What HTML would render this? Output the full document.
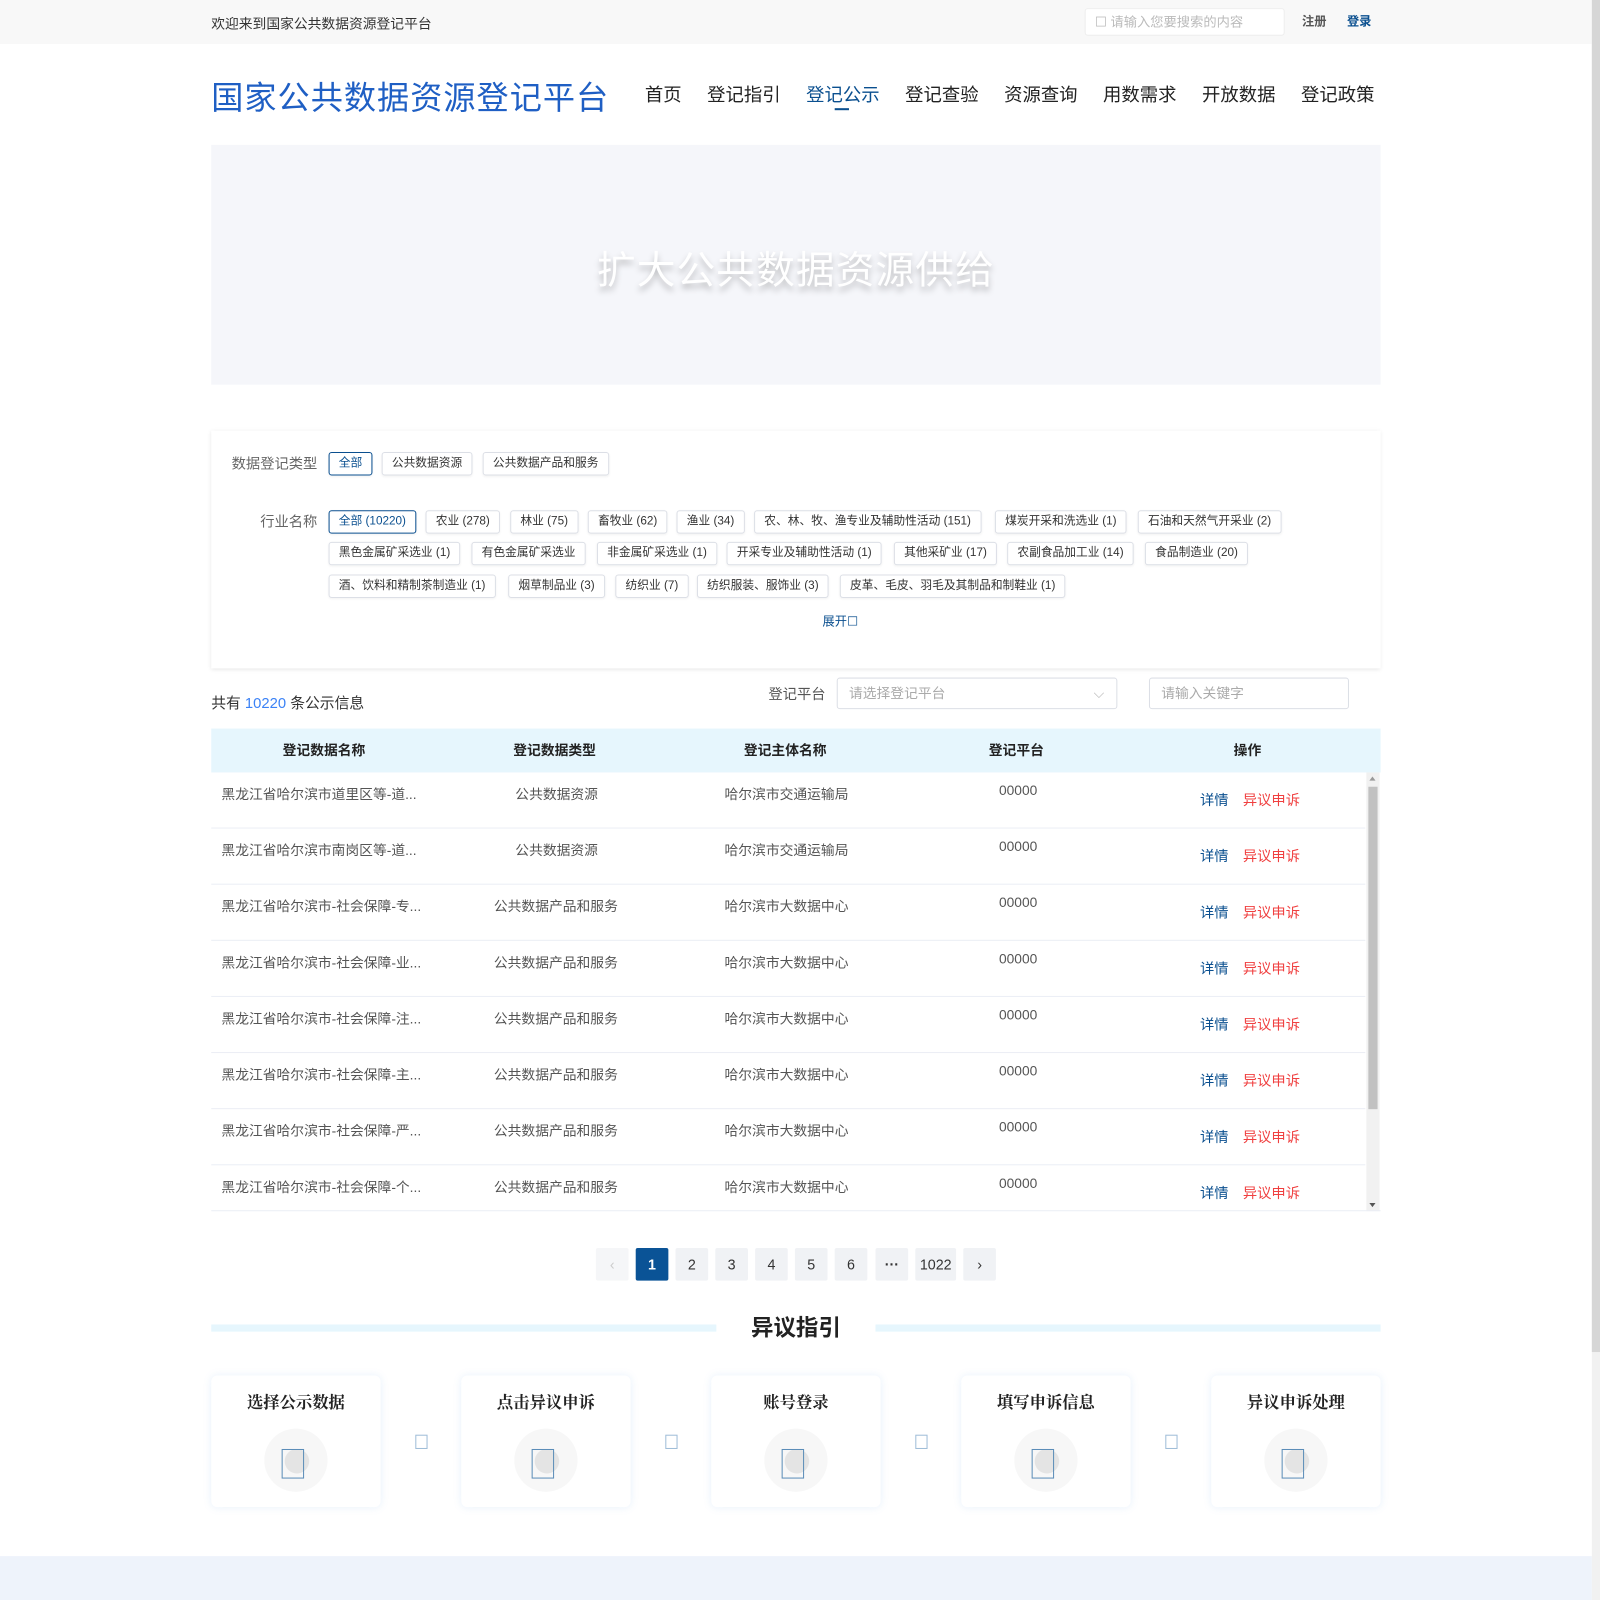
<!DOCTYPE html>
<html><head><meta charset="utf-8"><style>
*{margin:0;padding:0;box-sizing:border-box}
html,body{width:1600px;height:1600px;overflow:hidden;background:#fff}
body{font-family:"Liberation Sans","Noto Sans CJK SC",sans-serif;color:#333}
#w{position:absolute;left:0;top:0;width:1568px;height:1568px;transform:scale(1.020408);transform-origin:0 0}
.a{position:absolute}
.tag{position:absolute;height:23px;border:1px solid #dcdfe6;border-radius:3px;font-size:11.5px;line-height:21px;padding:0 9px;color:#333;white-space:nowrap;box-shadow:0 1px 2px rgba(0,0,0,.05)}
.tag.on{border-color:#0a4f8f;color:#0a4f8f}
.nav{position:absolute;top:79px;font-size:18px;color:#222}
.row{position:absolute;left:207px;width:1131px;height:55px;border-bottom:1px solid #ebeef5;font-size:13.5px;color:#555}
.row span{position:absolute;top:10px;white-space:nowrap}
.pg{position:absolute;top:1223px;width:32px;height:32px;background:#f0f2f5;border-radius:2px;text-align:center;line-height:32px;font-size:14px;color:#333}
.card{position:absolute;top:1348px;width:166px;height:129px;background:#fff;border-radius:6px;box-shadow:0 0 8px rgba(100,160,230,.15);text-align:center}
.card b{display:block;margin-top:14px;font-size:16px;color:#222;font-family:"Liberation Serif","Noto Serif CJK SC",serif}
.card i{position:absolute;left:52px;top:52px;width:62px;height:62px;border-radius:50%;background:#f7f7f7}
.card i:before{content:"";position:absolute;left:20px;top:20px;width:24px;height:24px;border-radius:50%;background:#e4e4e4}
.card i:after{content:"";position:absolute;left:17px;top:20px;width:20px;height:27px;border:1px solid #5b8db8}
.arr{position:absolute;top:1406px;width:12px;height:14px;border:1px solid #9fbdd8}
</style></head><body><div id="w">
<div class="a" style="left:0;top:0;width:1560px;height:43px;background:#f8f8f8"></div>
<div class="a" style="left:207px;top:12px;font-size:13.5px;color:#333">欢迎来到国家公共数据资源登记平台</div>
<div class="a" style="left:1063px;top:8px;width:196px;height:27px;background:#fff;border:1px solid #eee;border-radius:3px;font-size:13px;color:#bbb;line-height:25px;padding-left:9px">☐ 请输入您要搜索的内容</div>
<div class="a" style="left:1276px;top:12px;font-size:12px;font-weight:bold;color:#555">注册</div>
<div class="a" style="left:1320px;top:12px;font-size:12px;font-weight:bold;color:#0a4f8f">登录</div>
<div class="a" style="left:207px;top:71px;font-size:31.5px;color:#1f5fc4;letter-spacing:1px">国家公共数据资源登记平台</div>
<div class="nav" style="left:632px">首页</div>
<div class="nav" style="left:693px">登记指引</div>
<div class="nav" style="left:790px;color:#0a4f8f">登记公示</div>
<div class="a" style="left:818px;top:106px;width:14px;height:2px;background:#0a4f8f"></div>
<div class="nav" style="left:887px">登记查验</div>
<div class="nav" style="left:984px">资源查询</div>
<div class="nav" style="left:1081px">用数需求</div>
<div class="nav" style="left:1178px">开放数据</div>
<div class="nav" style="left:1275px">登记政策</div>
<div class="a" style="left:207px;top:142px;width:1146px;height:235px;background:#f5f6fa"></div>
<div class="a" style="left:207px;top:234px;width:1146px;text-align:center;font-size:38px;color:#fff;text-shadow:0 4px 6px rgba(0,0,0,.25);letter-spacing:1px">扩大公共数据资源供给</div>
<div class="a" style="left:207px;top:422px;width:1146px;height:233px;background:#fff;box-shadow:0 1px 4px rgba(0,0,0,.1)"></div>
<div class="a" style="left:227px;top:444px;font-size:14px;color:#666">数据登记类型</div>
<div class="tag on" style="left:322px;top:443px">全部</div>
<div class="tag" style="left:374px;top:443px">公共数据资源</div>
<div class="tag" style="left:473px;top:443px">公共数据产品和服务</div>
<div class="a" style="left:255px;top:501px;font-size:14px;color:#666">行业名称</div>
<div class="tag on" style="left:322px;top:500px">全部 (10220)</div>
<div class="tag" style="left:417px;top:500px">农业 (278)</div>
<div class="tag" style="left:500px;top:500px">林业 (75)</div>
<div class="tag" style="left:576px;top:500px">畜牧业 (62)</div>
<div class="tag" style="left:663px;top:500px">渔业 (34)</div>
<div class="tag" style="left:739px;top:500px">农、林、牧、渔专业及辅助性活动 (151)</div>
<div class="tag" style="left:975px;top:500px">煤炭开采和洗选业 (1)</div>
<div class="tag" style="left:1115px;top:500px">石油和天然气开采业 (2)</div>
<div class="tag" style="left:322px;top:531px">黑色金属矿采选业 (1)</div>
<div class="tag" style="left:462px;top:531px">有色金属矿采选业</div>
<div class="tag" style="left:585px;top:531px">非金属矿采选业 (1)</div>
<div class="tag" style="left:712px;top:531px">开采专业及辅助性活动 (1)</div>
<div class="tag" style="left:876px;top:531px">其他采矿业 (17)</div>
<div class="tag" style="left:987px;top:531px">农副食品加工业 (14)</div>
<div class="tag" style="left:1122px;top:531px">食品制造业 (20)</div>
<div class="tag" style="left:322px;top:563px">酒、饮料和精制茶制造业 (1)</div>
<div class="tag" style="left:498px;top:563px">烟草制品业 (3)</div>
<div class="tag" style="left:603px;top:563px">纺织业 (7)</div>
<div class="tag" style="left:683px;top:563px">纺织服装、服饰业 (3)</div>
<div class="tag" style="left:823px;top:563px">皮革、毛皮、羽毛及其制品和制鞋业 (1)</div>
<div class="a" style="left:806px;top:600px;font-size:12px;color:#0a4f8f">展开☐</div>
<div class="a" style="left:207px;top:678px;font-size:14.5px;color:#333">共有 <span style="color:#3b82f6">10220</span> 条公示信息</div>
<div class="a" style="left:753px;top:670px;font-size:14px;color:#555">登记平台</div>
<div class="a" style="left:820px;top:664px;width:275px;height:31px;border:1px solid #dcdfe6;border-radius:3px;font-size:13.5px;color:#aaa;line-height:29px;padding-left:11px">请选择登记平台<span style="position:absolute;right:12px;top:0;color:#bbb">⌵</span></div>
<div class="a" style="left:1126px;top:664px;width:196px;height:31px;border:1px solid #dcdfe6;border-radius:3px;font-size:13.5px;color:#aaa;line-height:29px;padding-left:11px">请输入关键字</div>
<div class="a" style="left:207px;top:714px;width:1146px;height:43px;background:#e6f6fd;font-size:13.5px;font-weight:bold;color:#222;line-height:43px">
<span class="a" style="left:70px">登记数据名称</span><span class="a" style="left:296px">登记数据类型</span><span class="a" style="left:522px">登记主体名称</span><span class="a" style="left:762px">登记平台</span><span class="a" style="left:1002px">操作</span></div>
<div class="a" style="left:1339px;top:757px;width:13px;height:430px;background:#f1f1f1"><div class="a" style="left:2px;top:14px;width:9px;height:316px;background:#c1c1c1"></div><div class="a" style="left:3px;top:4px;border:3px solid transparent;border-bottom:4px solid #999;border-top:0"></div><div class="a" style="left:3px;bottom:4px;border:3px solid transparent;border-top:4px solid #555;border-bottom:0"></div></div>
<div class="a" style="left:207px;top:1186px;width:1146px;height:1px;background:#ebeef5"></div>
<div id="rows"></div>
<script>
var d=[["黑龙江省哈尔滨市道里区等-道...","公共数据资源","哈尔滨市交通运输局"],["黑龙江省哈尔滨市南岗区等-道...","公共数据资源","哈尔滨市交通运输局"],["黑龙江省哈尔滨市-社会保障-专...","公共数据产品和服务","哈尔滨市大数据中心"],["黑龙江省哈尔滨市-社会保障-业...","公共数据产品和服务","哈尔滨市大数据中心"],["黑龙江省哈尔滨市-社会保障-注...","公共数据产品和服务","哈尔滨市大数据中心"],["黑龙江省哈尔滨市-社会保障-主...","公共数据产品和服务","哈尔滨市大数据中心"],["黑龙江省哈尔滨市-社会保障-严...","公共数据产品和服务","哈尔滨市大数据中心"],["黑龙江省哈尔滨市-社会保障-个...","公共数据产品和服务","哈尔滨市大数据中心"]];
var h="";d.forEach(function(r,i){var t=757+i*55;var bl=i==7?"border-bottom:0;height:30px;overflow:visible;":"";
h+='<div class="row" style="top:'+t+'px;'+bl+'"><span style="left:10px">'+r[0]+'</span><span style="left:'+(r[1].length==6?298:277)+'px">'+r[1]+'</span><span style="left:503px">'+r[2]+'</span><span style="left:772px">00000</span><span style="left:969px;top:17px;color:#0a4f8f;font-size:14px">详情</span><span style="left:1011px;top:17px;color:#f04040;font-size:14px">异议申诉</span></div>';});
document.getElementById("rows").innerHTML=h;
</script>
<div class="pg" style="left:584px;background:#f5f6f8;color:#ccc">‹</div>
<div class="pg" style="left:623px;background:#0a5396;color:#fff;font-weight:bold">1</div>
<div class="pg" style="left:662px">2</div><div class="pg" style="left:701px">3</div><div class="pg" style="left:740px">4</div><div class="pg" style="left:779px">5</div><div class="pg" style="left:818px">6</div><div class="pg" style="left:858px;font-weight:bold">···</div>
<div class="pg" style="left:897px;width:40px">1022</div><div class="pg" style="left:944px">›</div>
<div class="a" style="left:207px;top:1298px;width:495px;height:7px;background:#e6f6fd"></div>
<div class="a" style="left:858px;top:1298px;width:495px;height:7px;background:#e6f6fd"></div>
<div class="a" style="left:702px;top:1284px;width:156px;text-align:center;font-size:22px;font-weight:bold;color:#222">异议指引</div>
<div class="card" style="left:207px"><b>选择公示数据</b><i></i></div>
<div class="card" style="left:452px"><b>点击异议申诉</b><i></i></div>
<div class="card" style="left:697px"><b>账号登录</b><i></i></div>
<div class="card" style="left:942px"><b>填写申诉信息</b><i></i></div>
<div class="card" style="left:1187px"><b>异议申诉处理</b><i></i></div>
<div class="arr" style="left:407px"></div><div class="arr" style="left:652px"></div><div class="arr" style="left:897px"></div><div class="arr" style="left:1142px"></div>
<div class="a" style="left:0;top:1525px;width:1560px;height:43px;background:#eef3fb"></div>
<div class="a" style="left:1560px;top:0;width:8px;height:1568px;background:#f1f1f1"><div class="a" style="left:0;top:0;width:8px;height:1325px;background:#d6d6d6"></div></div>
</div></body></html>
